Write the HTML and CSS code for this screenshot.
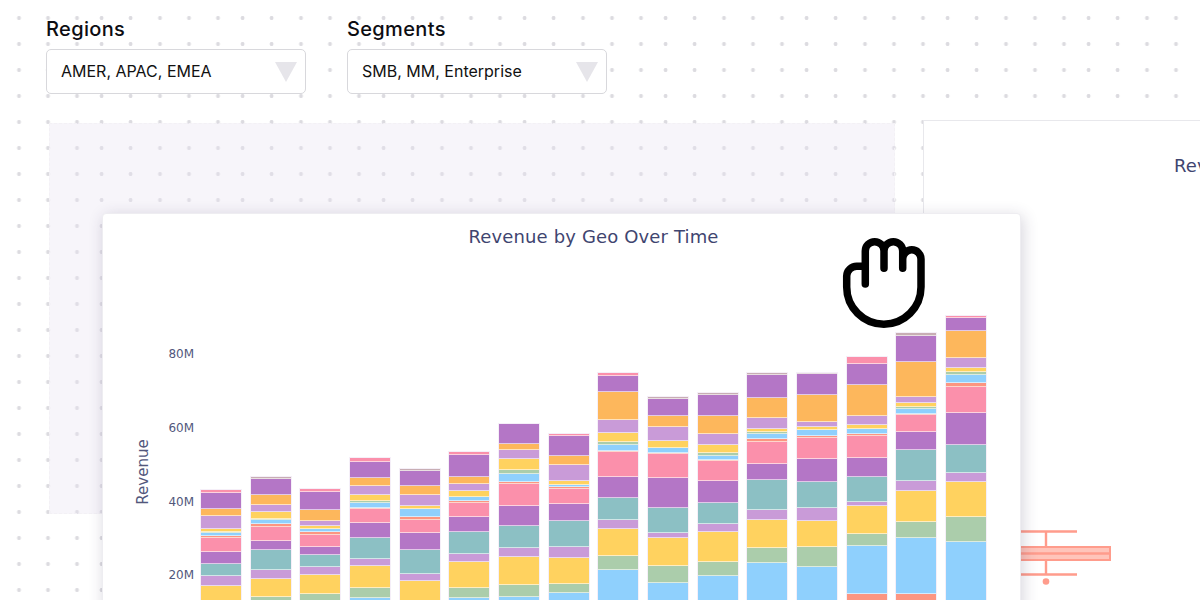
FILE: index.html
```html
<!DOCTYPE html>
<html lang="en">

<head>
    <meta charset="UTF-8">
    <meta name="viewport" content="width=device-width, initial-scale=1.0">
    <title>Dashboard</title>
    <link rel="stylesheet" href="styles.css">
</head>

<body>
    <div class="filters">
        <div class="filter">
            <div class="filter_label">Regions</div>
            <div class="select_box"><span>AMER, APAC, EMEA</span><i class="select_arrow"></i></div>
        </div>
        <div class="filter">
            <div class="filter_label">Segments</div>
            <div class="select_box"><span>SMB, MM, Enterprise</span><i class="select_arrow"></i></div>
        </div>
    </div>

    <!-- empty slot the chart was dragged out of -->
    <div class="drop_slot"></div>

    <div class="panel panel_right">
        <div class="panel_title">Revenue by Segment</div>
    </div>

    <svg class="box_plot" width="140" height="70" viewBox="1000 525 140 70">
        <path class="box_line" d="M1015 531.5H1077M1015 574.5H1077M1046 531.5V547M1046 560V574.5"/>
        <rect class="box_fill" x="1000" y="547" width="110" height="13"/>
        <path class="box_line" d="M1000 553.5H1110"/>
        <circle class="box_dot" cx="1046" cy="581.5" r="3.3"/>
    </svg>

    <div class="chart_card">
        <div class="plot">
            <div class="chart_title">Revenue by Geo Over Time</div>
            <div class="plot_area" id="plot_area">
                <div class="y_title">Revenue</div>
                <div class="bars" id="bars"></div>
            </div>
        </div>
    </div>

    <svg class="grab_hand" width="90" height="95" viewBox="0 0 90 95">
        <path d="M25.3 49V16A9.35 9.35 0 0 1 44 16V33.3M44 16A9.35 9.35 0 0 1 62.7 16V33.3M62.7 24A9.15 9.15 0 0 1 81 24V52A37.15 37.15 0 0 1 6.7 52V41A10 10 0 0 1 16.7 31.3H25.3"/>
    </svg>

    <script src="chart.js"></script>
</body>

</html>
```
FILE: styles.css
```css
* {
    margin: 0;
    padding: 0;
    box-sizing: border-box;
}

html,
body {
    height: 100%;
    overflow: hidden;
}

body {
    position: relative;
    padding: 17px 0 0 46px;
    font-family: "Inter", "Liberation Sans", sans-serif;
    background-color: #fff;
    background-image:
        radial-gradient(circle, #dcdbe0 1.7px, transparent 2.2px),
        radial-gradient(circle, #dcdbe0 1.7px, transparent 2.2px),
        radial-gradient(circle, #dcdbe0 1.7px, transparent 2.2px),
        radial-gradient(circle, #dcdbe0 1.7px, transparent 2.2px),
        radial-gradient(circle, #dcdbe0 1.7px, transparent 2.2px);
    background-size: 141px 26px;
    background-position: -51.5px 5px, -22.5px 5px, 6.5px 5px, 31.1px 5px, 60.1px 5px;
}

.filters {
    display: flex;
    gap: 41px;
}

.filter_label {
    font-size: 20px;
    font-weight: 500;
    letter-spacing: .35px;
    line-height: 24px;
    margin-bottom: 8px;
    color: #0d0d12;
}

.select_box {
    width: 260px;
    height: 45px;
    display: flex;
    align-items: center;
    justify-content: space-between;
    padding: 0 8px 0 14px;
    background: #fff;
    border: 1px solid #d8d8dc;
    border-radius: 5px;
    font-size: 16px;
    color: #111;
}

.select_box span {
    padding-bottom: 2px;
}

.select_arrow {
    width: 0;
    height: 0;
    border-left: 11px solid transparent;
    border-right: 11px solid transparent;
    border-top: 20px solid #e6e5ea;
}

.drop_slot {
    position: absolute;
    left: 49px;
    top: 123px;
    width: 846px;
    height: 391px;
    background: rgba(234, 226, 240, .36);
    border: 1px dashed #f3f1f5;
}

.panel {
    position: absolute;
    background: #fff;
    border: 1px solid #e8e8ec;
}

.panel_right {
    left: 923px;
    top: 120px;
    width: 918px;
    height: 600px;
    padding: 33px 0 0 250px;
}

.panel_title,
.chart_title {
    font-family: "DejaVu Sans", sans-serif;
    font-size: 18px;
    letter-spacing: .14px;
    line-height: 24px;
    color: #3f4570;
    white-space: nowrap;
}

.box_plot {
    position: absolute;
    left: 1000px;
    top: 525px;
}

.box_line {
    fill: none;
    stroke: #ff9c8c;
    stroke-width: 2.4;
}

.box_fill {
    fill: #ffc4ba;
    stroke: #ff9c8c;
    stroke-width: 2;
}

.box_dot {
    fill: #ff9c8c;
}

.chart_card {
    position: absolute;
    left: 102px;
    top: 213px;
    width: 919px;
    height: 500px;
    padding: 11px 0 0 98px;
    background: #fff;
    border: 1px solid #eeedf1;
    border-radius: 4px;
    box-shadow: 2px 3px 16px rgba(50, 40, 80, .2);
}

.plot {
    width: 785px;
}

.chart_title {
    text-align: center;
}

.plot_area {
    position: relative;
    height: 336px;
    margin-top: 64px;
}

.bars {
    height: 100%;
    display: flex;
    align-items: flex-end;
    justify-content: space-between;
}

.bar {
    width: 40px;
    display: flex;
    flex-direction: column;
    box-shadow: 0 0 0 1px rgba(238, 228, 244, .6);
}

.seg {
    flex: none;
    border-bottom: 1px solid rgba(255, 255, 255, .6);
}

.seg_last {
    flex: 1;
}

.c_P { background: #b476c6; }
.c_O { background: #fdb75c; }
.c_L { background: #c99bd8; }
.c_Y { background: #ffd25f; }
.c_T { background: #8cc0c4; }
.c_K { background: #fb90ab; }
.c_B { background: #8fd0fd; }
.c_G { background: #abcdab; }
.c_S { background: #fc9681; }
.c_A { background: #c8aeb4; }

.y_tick {
    position: absolute;
    right: calc(100% + 7px);
    font-family: "DejaVu Sans", sans-serif;
    font-size: 12px;
    line-height: 14px;
    color: #52577c;
    white-space: nowrap;
}

.y_title {
    position: absolute;
    left: -58px;
    top: 150px;
    width: 70px;
    line-height: 18px;
    text-align: center;
    font-family: "DejaVu Sans", sans-serif;
    font-size: 15px;
    color: #52577c;
    transform: translateX(-50%) rotate(-90deg);
}

.grab_hand {
    position: absolute;
    left: 840px;
    top: 235px;
}

.grab_hand path {
    fill: none;
    stroke: #000;
    stroke-width: 7.5;
    stroke-linecap: round;
    stroke-linejoin: round;
}
```
FILE: chart.js
```js
// each bar: top y, then "colour + y where that segment ends", last one runs off the bottom
let base_y = 649;
let bars_data = [
    [490, "K492.5 P508.5 O516 L528.5 Y531.5 G533 B535.5 S537.5 K551.5 P563.5 T575.5 L585.5 Y"],
    [476.7, "A478.5 P494.5 O504.5 L511.5 Y518.7 G520.3 B524.3 S527.3 K540.8 P550.2 T570.5 L579.5 Y597.5 G"],
    [488.7, "K491.5 P509.5 O521 L526.4 Y529 B532.3 S535 K547.5 P555.5 T567.5 L575 Y594.5 G"],
    [458.3, "K462 P477.5 O485.5 L495 Y501 G502.5 B508 S509.2 K523.5 P538 T559.5 L566 Y587.7 G598.5 B"],
    [469, "A470.5 P485.5 O494.7 L505.7 Y509.4 B517.5 S519.8 K532.8 P549.8 T573.8 L580.7 Y"],
    [451.7, "K454.7 P477 O483.5 L490.5 Y496.5 B501.2 S503.5 K517.5 P532 T554.3 L562.5 Y588.2 G598.5 B"],
    [423.7, "P443.5 O450.4 L459 Y470 G473.7 B481.7 S483.8 K506.4 P526.5 T548.2 L557.4 Y584.7 G596.7 B"],
    [433.7, "K435.8 P455.7 O464.8 L480.7 Y484.7 B487.4 S488.8 K503.7 P520.8 T547.4 L557.8 Y583.7 G593.5 B"],
    [373.3, "K375.5 P392 O420.4 L433.4 Y442 G445.4 B450.6 S452.1 K476.7 P498.2 T520.4 L528.8 Y555.8 G570 B"],
    [397.3, "A399.4 P415.8 O427.2 L440.8 Y447.7 B452.6 S454.5 K478.5 P508.4 T532.7 L538.5 Y566.5 G582.7 B"],
    [392.7, "A395 P416.2 O433.8 L445 Y452.7 G455.6 B459.7 S460.8 K480.7 P503.2 T523.6 L532.4 Y562.2 G576.5 B"],
    [373, "A375.4 P398.2 O417.7 L429.4 Y432 G434.5 B439 S441.8 K464.2 P480.4 T510.4 L520.4 Y548.5 G563.5 B"],
    [372.7, "A374.4 P395.4 O421.7 L427.4 Y429.7 B436.3 S438.4 K459.5 P482.4 T508.2 L521.4 Y546.7 G567.4 B"],
    [357.3, "K364.4 P385.4 O415.5 L424.7 Y429 B434.3 S436.4 K458.2 P477.2 T502.4 L506.4 Y534 G546.4 B594.5 S"],
    [333, "A336.4 P362 O396.7 L403.4 Y407 G409.4 B413.6 S415.4 K432.5 P450.5 T481.2 L491.2 Y522.2 G538.2 B593.8 S"],
    [315.7, "K317.7 P331.4 O358 L368 Y371.7 G375.4 B383.4 S386.6 K412.8 P444.8 T473.2 L482.4 Y517.2 G541.8 B"]
];
let y_ticks = [["80M", 80], ["60M", 60], ["40M", 40], ["20M", 20]];

let bars_box = document.getElementById("bars");
let plot_area = document.getElementById("plot_area");

bars_data.forEach(function (item) {
    let bar = document.createElement("div");
    bar.className = "bar";
    bar.style.height = (base_y - item[0]) + "px";
    let prev = item[0];
    item[1].split(" ").forEach(function (part) {
        let seg = document.createElement("div");
        let end = parseFloat(part.slice(1));
        seg.className = "seg c_" + part[0];
        if (isNaN(end)) {
            seg.className += " seg_last";
        } else {
            seg.style.height = (end - prev) + "px";
            prev = end;
        }
        bar.appendChild(seg);
    });
    bars_box.appendChild(bar);
});

y_ticks.forEach(function (tick) {
    let label = document.createElement("div");
    label.className = "y_tick";
    label.textContent = tick[0];
    // 3.685px per million, label is 14px tall
    label.style.top = (336 - tick[1] * 3.685 - 7) + "px";
    plot_area.appendChild(label);
});
```
